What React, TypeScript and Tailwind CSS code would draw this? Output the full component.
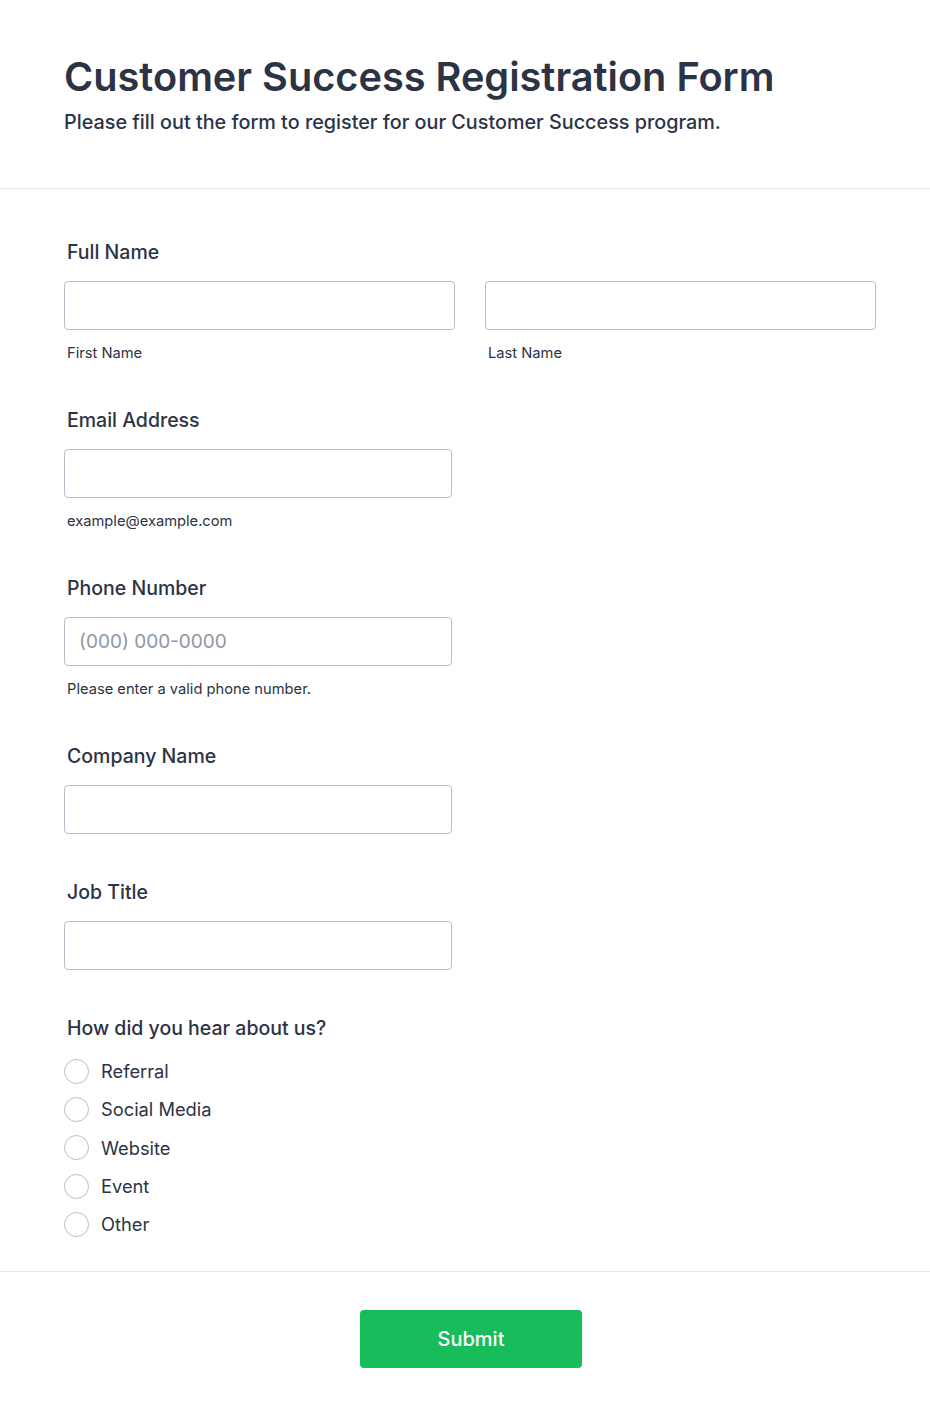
import React from "react";

const font = { fontFamily: "Inter, 'Noto Sans', sans-serif" };

function Label({ children }: { children: React.ReactNode }) {
  return (
    <div className="pl-[3px] text-[19.5px] leading-[24px] font-medium text-[#2c3345]">{children}</div>
  );
}

function Input({ placeholder, w }: { placeholder?: string; w: string }) {
  return (
    <input
      placeholder={placeholder}
      className={`${w} h-[49px] rounded-[4px] border border-[#b8bdc9] bg-white px-[14px] text-[19px] text-[#2c3345] placeholder:text-[#8f96a3] outline-none`}
    />
  );
}

function Hint({ children }: { children: React.ReactNode }) {
  return <div className="mt-[13px] pl-[3px] text-[14.7px] leading-[20px] text-[#2c3345]">{children}</div>;
}

export default function App() {
  const options = ["Referral", "Social Media", "Website", "Event", "Other"];
  return (
    <div className="w-[930px] min-h-[1418px] bg-white" style={font}>
      <div className="px-[64px] pt-[52px] h-[189px] border-b border-[#e3e5ea]">
        <h1 className="text-[39.7px] leading-[50px] font-semibold text-[#2c3345]">
          Customer Success Registration Form
        </h1>
        <p className="mt-[7px] text-[19.8px] leading-[26px] font-medium text-[#2c3345]">
          Please fill out the form to register for our Customer Success program.
        </p>
      </div>

      <div className="px-[64px] pt-[51px] pb-[28px] border-b border-[#e3e5ea]">
        <div className="mb-[45px]">
          <Label>Full Name</Label>
          <div className="mt-[17px] flex gap-[30px]">
            <div>
              <Input w="w-[391px]" />
              <Hint>First Name</Hint>
            </div>
            <div>
              <Input w="w-[391px]" />
              <Hint>Last Name</Hint>
            </div>
          </div>
        </div>

        <div className="mb-[45px]">
          <Label>Email Address</Label>
          <div className="mt-[17px]">
            <Input w="w-[388px]" />
            <Hint>example@example.com</Hint>
          </div>
        </div>

        <div className="mb-[45px]">
          <Label>Phone Number</Label>
          <div className="mt-[17px]">
            <Input w="w-[388px]" placeholder="(000) 000-0000" />
            <Hint>Please enter a valid phone number.</Hint>
          </div>
        </div>

        <div className="mb-[46px]">
          <Label>Company Name</Label>
          <div className="mt-[17px]">
            <Input w="w-[388px]" />
          </div>
        </div>

        <div className="mb-[46px]">
          <Label>Job Title</Label>
          <div className="mt-[17px]">
            <Input w="w-[388px]" />
          </div>
        </div>

        <div>
          <Label>How did you hear about us?</Label>
          <div className="mt-[12px] flex flex-col">
            {options.map((o) => (
              <label key={o} className="flex h-[38.3px] items-center gap-[12px]">
                <span className="h-[25px] w-[25px] rounded-full border border-[#b8bdc9] bg-white" />
                <span className="text-[18.3px] leading-[24px] text-[#2c3345]">{o}</span>
              </label>
            ))}
          </div>
        </div>
      </div>

      <div className="flex pt-[38px] pb-[50px]">
        <button className="ml-[360px] h-[58px] w-[222px] rounded-[4px] bg-[#18bd5b] text-[20px] font-medium text-white">
          Submit
        </button>
      </div>
    </div>
  );
}
